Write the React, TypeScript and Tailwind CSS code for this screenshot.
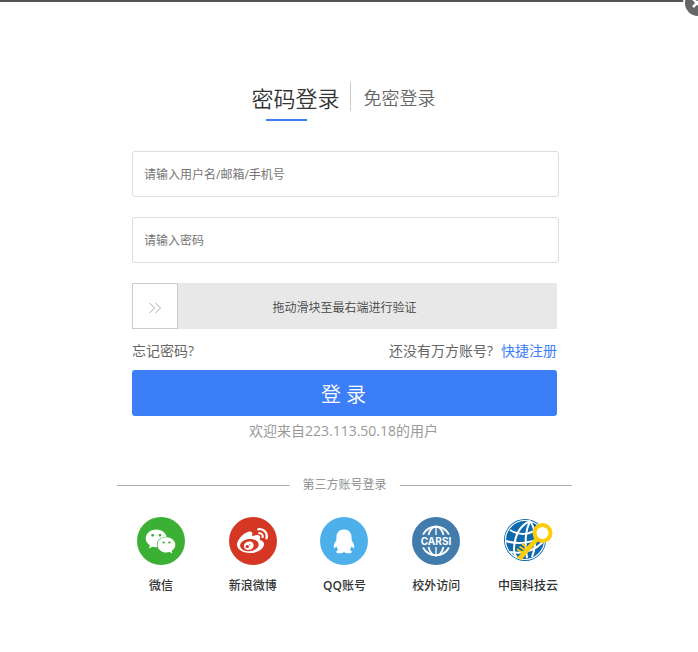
import { useState } from "react";
import type { ReactNode } from "react";
import { FaWeibo, FaWeixin } from "react-icons/fa";

function QqIcon() {
  return (
    <svg viewBox="0 0 48 48" className="size-12" fill="#fff" aria-hidden="true">
      <path d="M24 12.500c-5 0-7.600 3.500-7.600 8v2.700c-1.700 2.200-2.800 4.600-2.700 6.800.1 1.500.9 1.500 1.600.5l1-1.200c.4 1.500 1 2.700 2 3.700-1.500.5-2.300 1.400-2 2.200.6 1.500 6.200 1.500 7.700-.5 1.500 2 7.100 2 7.700.5.3-.8-.5-1.700-2-2.200 1-1 1.600-2.200 2-3.700l1 1.200c.7 1 1.500 1 1.600-.5.1-2.200-1-4.600-2.700-6.800v-2.700c0-4.500-2.600-8-7.600-8z" />
    </svg>
  );
}

function CarsiIcon() {
  return (
    <svg viewBox="0 0 48 48" className="size-12" aria-hidden="true">
      <g fill="none" stroke="#fff" strokeWidth="1.800">
        <path d="M11 17.500a14.800 14.800 0 0 1 26 0M11 30.500a14.800 14.800 0 0 0 26 0" />
        <path d="M16.500 18c1.300-5 4-8.500 7.500-8.500s6.200 3.500 7.500 8.500M16.500 30c1.300 5 4 8.500 7.500 8.500s6.200-3.500 7.500-8.500" />
        <path d="M24 10v8M24 30v8" strokeWidth="1.300" />
      </g>
      <text
        x="24"
        y="27.500"
        textAnchor="middle"
        fill="#fff"
        fontSize="10"
        fontWeight="700"
        fontFamily="Inter, sans-serif"
      >
        CARSI
      </text>
    </svg>
  );
}

function CloudKeyIcon() {
  return (
    <svg viewBox="0 0 50 48" className="h-12 w-[50px] shrink-0" aria-hidden="true">
      <circle cx="22" cy="23" r="21" fill="#0d69ab" />
      <g fill="none" stroke="#fff" strokeWidth="2">
        <circle cx="22" cy="23" r="19.500" strokeWidth="1.200" />
        <path d="M27 4C18 8 12 17 11 31c0 5 1 8 3 9" />
        <path d="M27 4c-4 8-6 20-3 37" />
        <path d="M27 4c5 7 8 20 2 36" />
        <path d="M7 13c8 5 19 6 28-2M3 24c12 4 27 2 37-5M7 35c12 2 24-1 33-10" />
      </g>
      <g stroke="#fccc0a" fill="none">
        <circle cx="39.500" cy="16" r="8" strokeWidth="4" fill="#fff" />
        <path d="M34 22L16 42" strokeWidth="4.800" />
        <path d="M20 36l-6-4M25 31l-6-4M22.500 33.500l-6-4" strokeWidth="1.700" />
      </g>
    </svg>
  );
}

const providers: { id: string; name: ReactNode; color: string; icon: ReactNode }[] = [
  { id: "wechat", name: "微信", color: "bg-[#3cb034]", icon: <FaWeixin className="size-[31px]" /> },
  { id: "weibo", name: "新浪微博", color: "bg-[#d43724]", icon: <FaWeibo className="size-[31px]" /> },
  {
    id: "qq",
    name: (
      <span>
        <span className="font-semibold">QQ</span>账号
      </span>
    ),
    color: "bg-[#4db0eb]",
    icon: <QqIcon />,
  },
  { id: "carsi", name: "校外访问", color: "bg-[#417cad]", icon: <CarsiIcon /> },
  { id: "cstcloud", name: "中国科技云", color: "bg-white", icon: <CloudKeyIcon /> },
];

function SlideVerify() {
  const [value, setValue] = useState(0);

  return (
    <div className="relative mt-5 h-[46px] bg-[#e8e8e8]">
      <label
        htmlFor="verify"
        className="absolute inset-0 flex items-center justify-center pt-1 text-xs text-[#444]"
      >
        拖动滑块至最右端进行验证
      </label>
      <input
        id="verify"
        type="range"
        min={0}
        max={100}
        value={value}
        onChange={(e) => setValue(Number(e.target.value))}
        className="absolute inset-0 h-full w-full cursor-pointer appearance-none bg-transparent outline-none [&::-webkit-slider-thumb]:size-[46px] [&::-webkit-slider-thumb]:appearance-none [&::-webkit-slider-thumb]:border [&::-webkit-slider-thumb]:border-[#ccc] [&::-webkit-slider-thumb]:bg-white"
      />
      <span
        className="pointer-events-none absolute flex size-[46px] items-center justify-center"
        style={{ left: `calc((100% - 46px) * ${value / 100})` }}
      >
        <svg viewBox="0 0 12 12" className="mt-1 size-3" fill="none" stroke="#aaa" aria-hidden="true">
          <path d="M.5 1l5 5-5 5M6.500 1l5 5-5 5" />
        </svg>
      </span>
    </div>
  );
}

export default function App() {
  return (
    <div className="relative overflow-hidden bg-white pr-[9px] pb-14 font-['Open_Sans','Noto_Sans_CJK_SC',sans-serif] font-[350]">
      <div className="h-0.5 bg-[#555]" />
      <button
        type="button"
        aria-label="关闭"
        className="absolute -top-3 -right-[15px] flex size-[30px] items-center justify-center rounded-full border-2 border-white bg-[#666]"
      >
        <svg viewBox="0 0 12 12" className="size-3" stroke="#fff" strokeWidth="2.500" aria-hidden="true">
          <path d="M1 2l8 8M9 2l-8 8" />
        </svg>
      </button>

      <main className="mx-auto max-w-[455px] pt-20">
        <form className="px-[15px]" onSubmit={(e) => e.preventDefault()}>
          <div className="flex justify-center pr-0.5">
            <button
              type="button"
              className="relative h-[39px] cursor-pointer pr-2.5 pb-2 text-[22px] leading-8 text-[#333]"
            >
              密码登录
              <span className="absolute bottom-0 left-[15px] h-0.5 w-[41px] bg-[#3b7ef7]" />
            </button>
            <button
              type="button"
              className="h-[29px] cursor-pointer border-l border-[#ccc] pl-[13px] text-lg leading-8 text-[#666]"
            >
              免密登录
            </button>
          </div>

          <input
            type="text"
            aria-label="用户名"
            placeholder="请输入用户名/邮箱/手机号"
            className="-mr-0.5 mt-[30px] block h-[46px] w-[calc(100%+2px)] rounded-[3px] border border-[#ddd] px-[11px] text-xs font-normal outline-none placeholder:text-[#757575]"
          />
          <input
            type="password"
            aria-label="密码"
            placeholder="请输入密码"
            className="-mr-0.5 mt-5 block h-[46px] w-[calc(100%+2px)] rounded-[3px] border border-[#ddd] px-[11px] text-xs font-normal outline-none placeholder:text-[#757575]"
          />

          <SlideVerify />

          <div className="mt-3 flex justify-between text-sm font-normal text-[#666]">
            <a href="#forgot">忘记密码?</a>
            <span>
              还没有万方账号?
              <a href="#register" className="ml-2 text-[#3b7ef7]">
                快捷注册
              </a>
            </span>
          </div>

          <button
            type="submit"
            className="mt-[9px] h-[46px] w-full cursor-pointer rounded-[3px] bg-[#3b7ef7] pt-1 pr-0.5 text-xl text-white"
          >
            登 录
          </button>
          <p className="mt-[5px] pr-0.5 text-center text-sm font-normal text-[#999]">
            欢迎来自223.113.50.18的用户
          </p>
        </form>

        <div className="mt-9 flex items-center gap-[13px] text-xs text-[#888]">
          <span className="h-px flex-1 bg-[#b2b2b2]" />
          第三方账号登录
          <span className="h-px flex-1 bg-[#b2b2b2]" />
        </div>

        <ul className="-mx-0.5 mt-6 grid grid-cols-5">
          {providers.map((item) => (
            <li key={item.id}>
              <a href={`#${item.id}`} className="flex flex-col items-center gap-[13px] text-xs font-medium text-[#333]">
                <span className={`flex size-12 items-center justify-center rounded-full text-white ${item.color}`}>
                  {item.icon}
                </span>
                {item.name}
              </a>
            </li>
          ))}
        </ul>
      </main>
    </div>
  );
}
